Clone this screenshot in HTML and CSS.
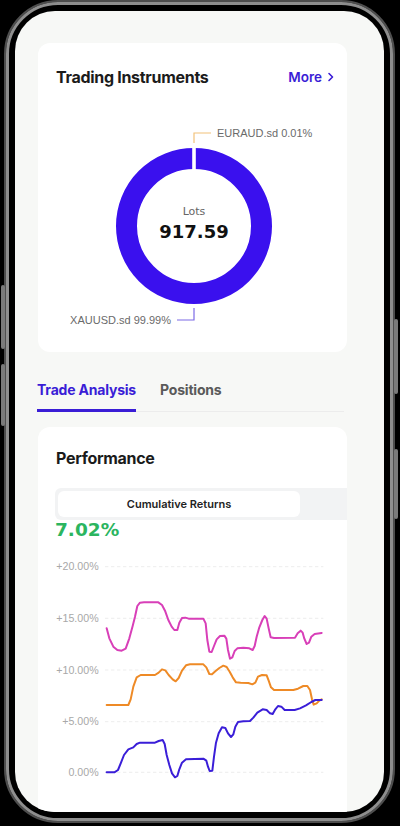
FILE: index.html
```html
<!DOCTYPE html>
<html lang="en">
<head>
<meta charset="utf-8">
<title>Trading Instruments</title>
<link rel="stylesheet" href="styles.css">
</head>
<body>
<div class="phone">
  <span class="btn btn-l1"></span>
  <span class="btn btn-l2"></span>
  <span class="btn btn-r1"></span>
  <span class="btn btn-r2"></span>
  <div class="bezel">
    <div class="screen">
      <section class="card instruments">
        <div class="card-head">
          <h2 class="card-title">Trading Instruments</h2>
          <a class="more">More <svg class="chev" width="8" height="10" viewBox="0 0 8 10"><path d="M2 1.5 L5.5 5 L2 8.5" fill="none" stroke="#3a1dd6" stroke-width="1.6" stroke-linecap="round" stroke-linejoin="round"/></svg></a>
        </div>
        <svg class="donut" width="309" height="257" viewBox="0 0 309 257">
          <circle cx="156" cy="131" r="67.5" fill="none" stroke="#3a10ee" stroke-width="21"/>
          <rect x="154.2" y="51" width="3.6" height="25" fill="#fff"/>
          <polyline points="156,48 156,38 173,38" fill="none" stroke="#f2c27a" stroke-width="1.2"/>
          <text x="179" y="42" class="lbl">EURAUD.sd 0.01%</text>
          <polyline points="156,213 156,225 139,225" fill="none" stroke="#7c6ae6" stroke-width="1.2"/>
          <text x="133" y="229" class="lbl" text-anchor="end">XAUUSD.sd 99.99%</text>
          <text x="156" y="120" class="lots" text-anchor="middle">Lots</text>
          <text x="156" y="143" class="total" text-anchor="middle">917.59</text>
        </svg>
      </section>

      <nav class="tabs">
        <span class="tab active">Trade Analysis</span>
        <span class="tab">Positions</span>
      </nav>

      <section class="card perf">
        <h2 class="card-title">Performance</h2>
        <div class="seg">
          <span class="seg-item on">Cumulative Returns</span>
        </div>
        <div class="ret">7.02%</div>
        <svg class="chart" width="300" height="235" viewBox="120 45 900 705">
          <g class="grid">
            <line x1="315" y1="80" x2="970" y2="80"/>
            <line x1="315" y1="235" x2="970" y2="235"/>
            <line x1="315" y1="390" x2="970" y2="390"/>
            <line x1="315" y1="545" x2="970" y2="545"/>
            <line x1="315" y1="697" x2="970" y2="697"/>
          </g>
          <g class="ylab">
            <text x="296" y="91">+20.00%</text>
            <text x="296" y="246">+15.00%</text>
            <text x="296" y="401">+10.00%</text>
            <text x="296" y="556">+5.00%</text>
            <text x="296" y="708">0.00%</text>
          </g>
          <polyline class="ln pink" points="320,265 328,295 340,320 352,330 365,332 377,326 388,295 398,258 405,230 412,198 420,188 432,187 475,187 486,195 495,212 505,240 515,260 523,270 532,270 538,248 546,234 556,233 566,236 610,236 617,250 622,300 628,335 635,336 642,318 650,298 660,288 673,287 679,296 684,330 690,356 697,352 704,333 712,325 730,323 748,325 758,330 764,318 770,290 778,262 787,240 794,228 800,236 806,265 812,292 822,294 885,293 893,280 902,272 908,278 913,296 920,312 927,308 934,290 944,282 965,279"/>
          <polyline class="ln orange" points="320,495 385,495 392,478 400,440 410,412 422,405 465,405 476,398 486,388 496,391 506,405 518,418 527,424 536,414 546,392 558,376 570,373 610,373 619,382 628,402 636,403 646,394 658,384 670,377 680,381 689,395 698,412 708,427 722,428 745,429 757,433 766,428 774,410 786,405 800,406 806,422 813,442 822,450 880,450 894,446 910,438 922,438 930,450 936,478 941,494 950,490 958,482 965,478"/>
          <polyline class="ln blue" points="320,697 343,697 354,690 363,668 372,645 385,628 400,622 410,612 420,608 465,608 476,603 488,600 494,612 500,645 508,675 516,700 525,712 532,708 538,688 546,668 558,658 610,656 619,662 624,680 629,693 637,692 642,650 648,608 656,580 666,562 676,564 684,580 693,591 700,583 706,560 714,546 730,544 750,543 760,533 772,518 788,508 800,510 810,520 818,522 826,508 834,498 844,500 854,510 884,510 900,505 918,496 934,486 946,480 965,480"/>
        </svg>
      </section>
    </div>
  </div>
</div>
</body>
</html>
```
FILE: styles.css
```css
* { box-sizing: border-box; }
html, body { margin: 0; padding: 0; }
body {
  background: #000;
  width: 400px;
  height: 826px;
  overflow: hidden;
  font-family: Inter, "Liberation Sans", sans-serif;
}
.phone {
  position: relative;
  margin-left: 4px;
  width: 391px;
  height: 823px;
  border: 2px solid #4e4e4e;
  border-radius: 54px;
}
.bezel {
  width: 100%;
  height: 100%;
  border: 3px solid #8e8e8e;
  border-radius: 52px;
  padding: 6px;
  background: #000;
}
.screen {
  width: 100%;
  height: 100%;
  background: #f7f8f6;
  border-radius: 40px;
  overflow: hidden;
  padding: 32px 37px 0 23px;
}
.btn {
  position: absolute;
  width: 4px;
  background: #7a7a7a;
  border-radius: 2px;
}
.btn-l1 { left: -5px; top: 283px; height: 64px; }
.btn-l2 { left: -5px; top: 362px; height: 62px; }
.btn-r1 { right: -5px; top: 317px; height: 75px; }
.btn-r2 { right: -5px; top: 447px; height: 70px; }

.card {
  background: #fff;
  border-radius: 12px;
  width: 309px;
}
.instruments { padding-top: 24px; height: 309px; }
.card-head {
  display: flex;
  justify-content: space-between;
  align-items: center;
  padding: 0 12px 0 18px;
  height: 20px;
}
.card-title {
  margin: 0;
  font-size: 16px;
  line-height: 20px;
  font-weight: 700;
  color: #1b1b1b;
  letter-spacing: -0.3px;
}
.more {
  display: flex;
  align-items: center;
  gap: 5px;
  font-size: 13.5px;
  font-weight: 600;
  color: #3a1dd6;
}
.chev { display: block; }
.donut { display: block; margin-top: 8px; }
.lbl { font-family: "Liberation Sans", Arial, sans-serif; font-size: 11px; fill: #6a6a6a; }
.lots { font-family: "DejaVu Sans", sans-serif; font-size: 11px; fill: #666; }
.total { font-family: "DejaVu Sans", sans-serif; font-size: 18px; font-weight: 700; fill: #111; }

.tabs {
  display: flex;
  gap: 24px;
  margin: 28px -1px 0 -1px;
  border-bottom: 1px solid #ececec;
  width: 307px;
}
.tab {
  font-size: 14px;
  line-height: 20px;
  font-weight: 700;
  letter-spacing: -0.2px;
  color: #5a5a5a;
  padding-bottom: 9px;
}
.tab.active {
  color: #3a1dd6;
  border-bottom: 3px solid #3a1dd6;
  margin-bottom: -1px;
}

.perf {
  margin-top: 15px;
  padding: 20px 0 0 18px;
  height: 420px;
  overflow: hidden;
}
.perf .card-title { line-height: 22px; }
.seg {
  margin-top: 19px;
  background: #f2f3f4;
  height: 32px;
  padding: 3px;
  width: 320px;
  border-radius: 6px 0 0 6px;
  margin-left: -1px;
}
.seg-item {
  display: flex;
  align-items: center;
  justify-content: center;
  width: 242px;
  height: 26px;
  background: #fff;
  border-radius: 6px;
  font-size: 11px;
  font-weight: 600;
  color: #222;
}
.ret {
  font-family: "DejaVu Sans", sans-serif;
  font-weight: 700;
  font-size: 18.5px;
  line-height: 20px;
  color: #2bb55f;
  margin-left: -1px;
}
.chart { display: block; margin: 15px 0 0 -16px; }
.grid line { stroke: #e4e4e4; stroke-width: 2; stroke-dasharray: 10 8; }
.ylab text {
  font-family: "Liberation Sans", Arial, sans-serif;
  font-size: 32px;
  fill: #a8a8a8;
  text-anchor: end;
}
.ln { fill: none; stroke-width: 6; stroke-linejoin: round; stroke-linecap: round; }
.pink { stroke: #d83fb8; }
.orange { stroke: #ee8a26; }
.blue { stroke: #3a1ed8; }
```
